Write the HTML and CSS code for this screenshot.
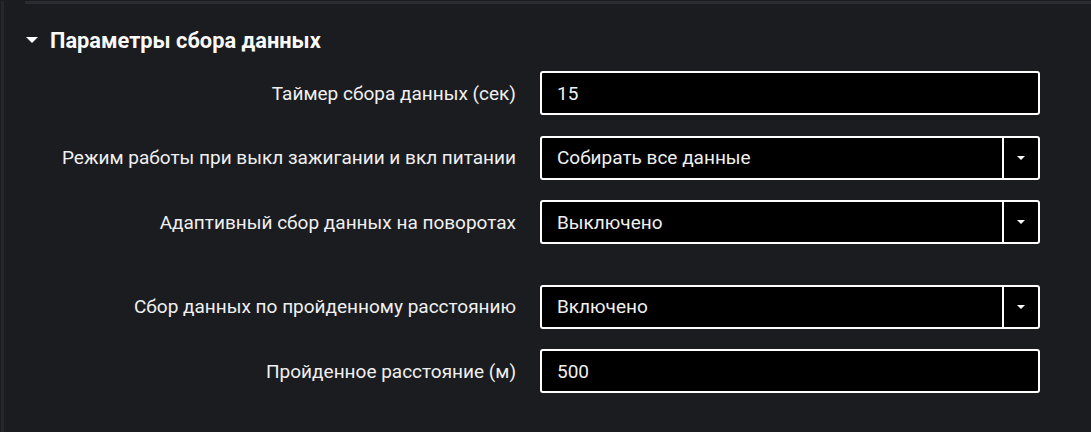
FILE: index.html
```html
<!DOCTYPE html>
<html>
<head>
<meta charset="UTF-8">
<title>Параметры сбора данных</title>
<link rel="stylesheet" href="styles.css">
</head>
<body>
<div class="panel">
<div class="section">
<h2 class="section-title"><span class="caret"></span>Параметры сбора данных</h2>

<div class="rows">
<div class="row">
<label class="row-label">Таймер сбора данных (сек)</label>
<div class="field"><span class="field-value">15</span></div>
</div>

<div class="row">
<label class="row-label">Режим работы при выкл зажигании и вкл питании</label>
<div class="field select"><span class="field-value">Собирать все данные</span><span class="select-btn"><span class="caret small"></span></span></div>
</div>

<div class="row">
<label class="row-label">Адаптивный сбор данных на поворотах</label>
<div class="field select"><span class="field-value">Выключено</span><span class="select-btn"><span class="caret small"></span></span></div>
</div>

<div class="row spaced">
<label class="row-label">Сбор данных по пройденному расстоянию</label>
<div class="field select"><span class="field-value">Включено</span><span class="select-btn"><span class="caret small"></span></span></div>
</div>

<div class="row">
<label class="row-label">Пройденное расстояние (м)</label>
<div class="field"><span class="field-value">500</span></div>
</div>
</div>
</div>
</div>
</body>
</html>
```
FILE: styles.css
```css
html, body{
    margin:0;
    padding:0;
    background:#1b1c20;
    height:100%;
}
body{
    font-family:Roboto, "Liberation Sans", sans-serif;
    color:#f0f0f0;
}
.panel{
    border-left:3px solid #26272c;
    margin-left:1px;
    min-height:100%;
    box-sizing:border-box;
    padding-left:21px;
}
.section{
    border-top:3px solid #2b2c31;
    margin-top:1px;
    padding-top:23px;
}
.section-title{
    margin:0 0 18px 0;
    font-size:21.8px;
    font-weight:bold;
    display:flex;
    align-items:center;
    color:#fafafa;
    height:26px;
}
.caret{
    display:inline-block;
    width:0;
    height:0;
    border-left:6px solid transparent;
    border-right:6px solid transparent;
    border-top:6px solid #fff;
    margin:0 12px 0 1px;
}
.caret.small{
    border-left-width:4px;
    border-right-width:4px;
    border-top-width:4px;
    margin:0;
}
.rows{
    display:flex;
    flex-direction:column;
    gap:20.5px;
}
.row{
    display:flex;
    align-items:center;
}
.row.spaced{
    margin-top:20px;
}
.row-label{
    width:491px;
    text-align:right;
    padding-right:24px;
    font-size:19px;
    flex-shrink:0;
}
.field{
    width:500px;
    height:44px;
    box-sizing:border-box;
    border:2px solid #fff;
    border-radius:3px;
    background:#000;
    display:flex;
    align-items:center;
    font-size:19px;
}
.field-value{
    flex:1;
    padding-left:15px;
}
.select-btn{
    width:34px;
    height:100%;
    border-left:2px solid #fff;
    display:flex;
    align-items:center;
    justify-content:center;
}
```
